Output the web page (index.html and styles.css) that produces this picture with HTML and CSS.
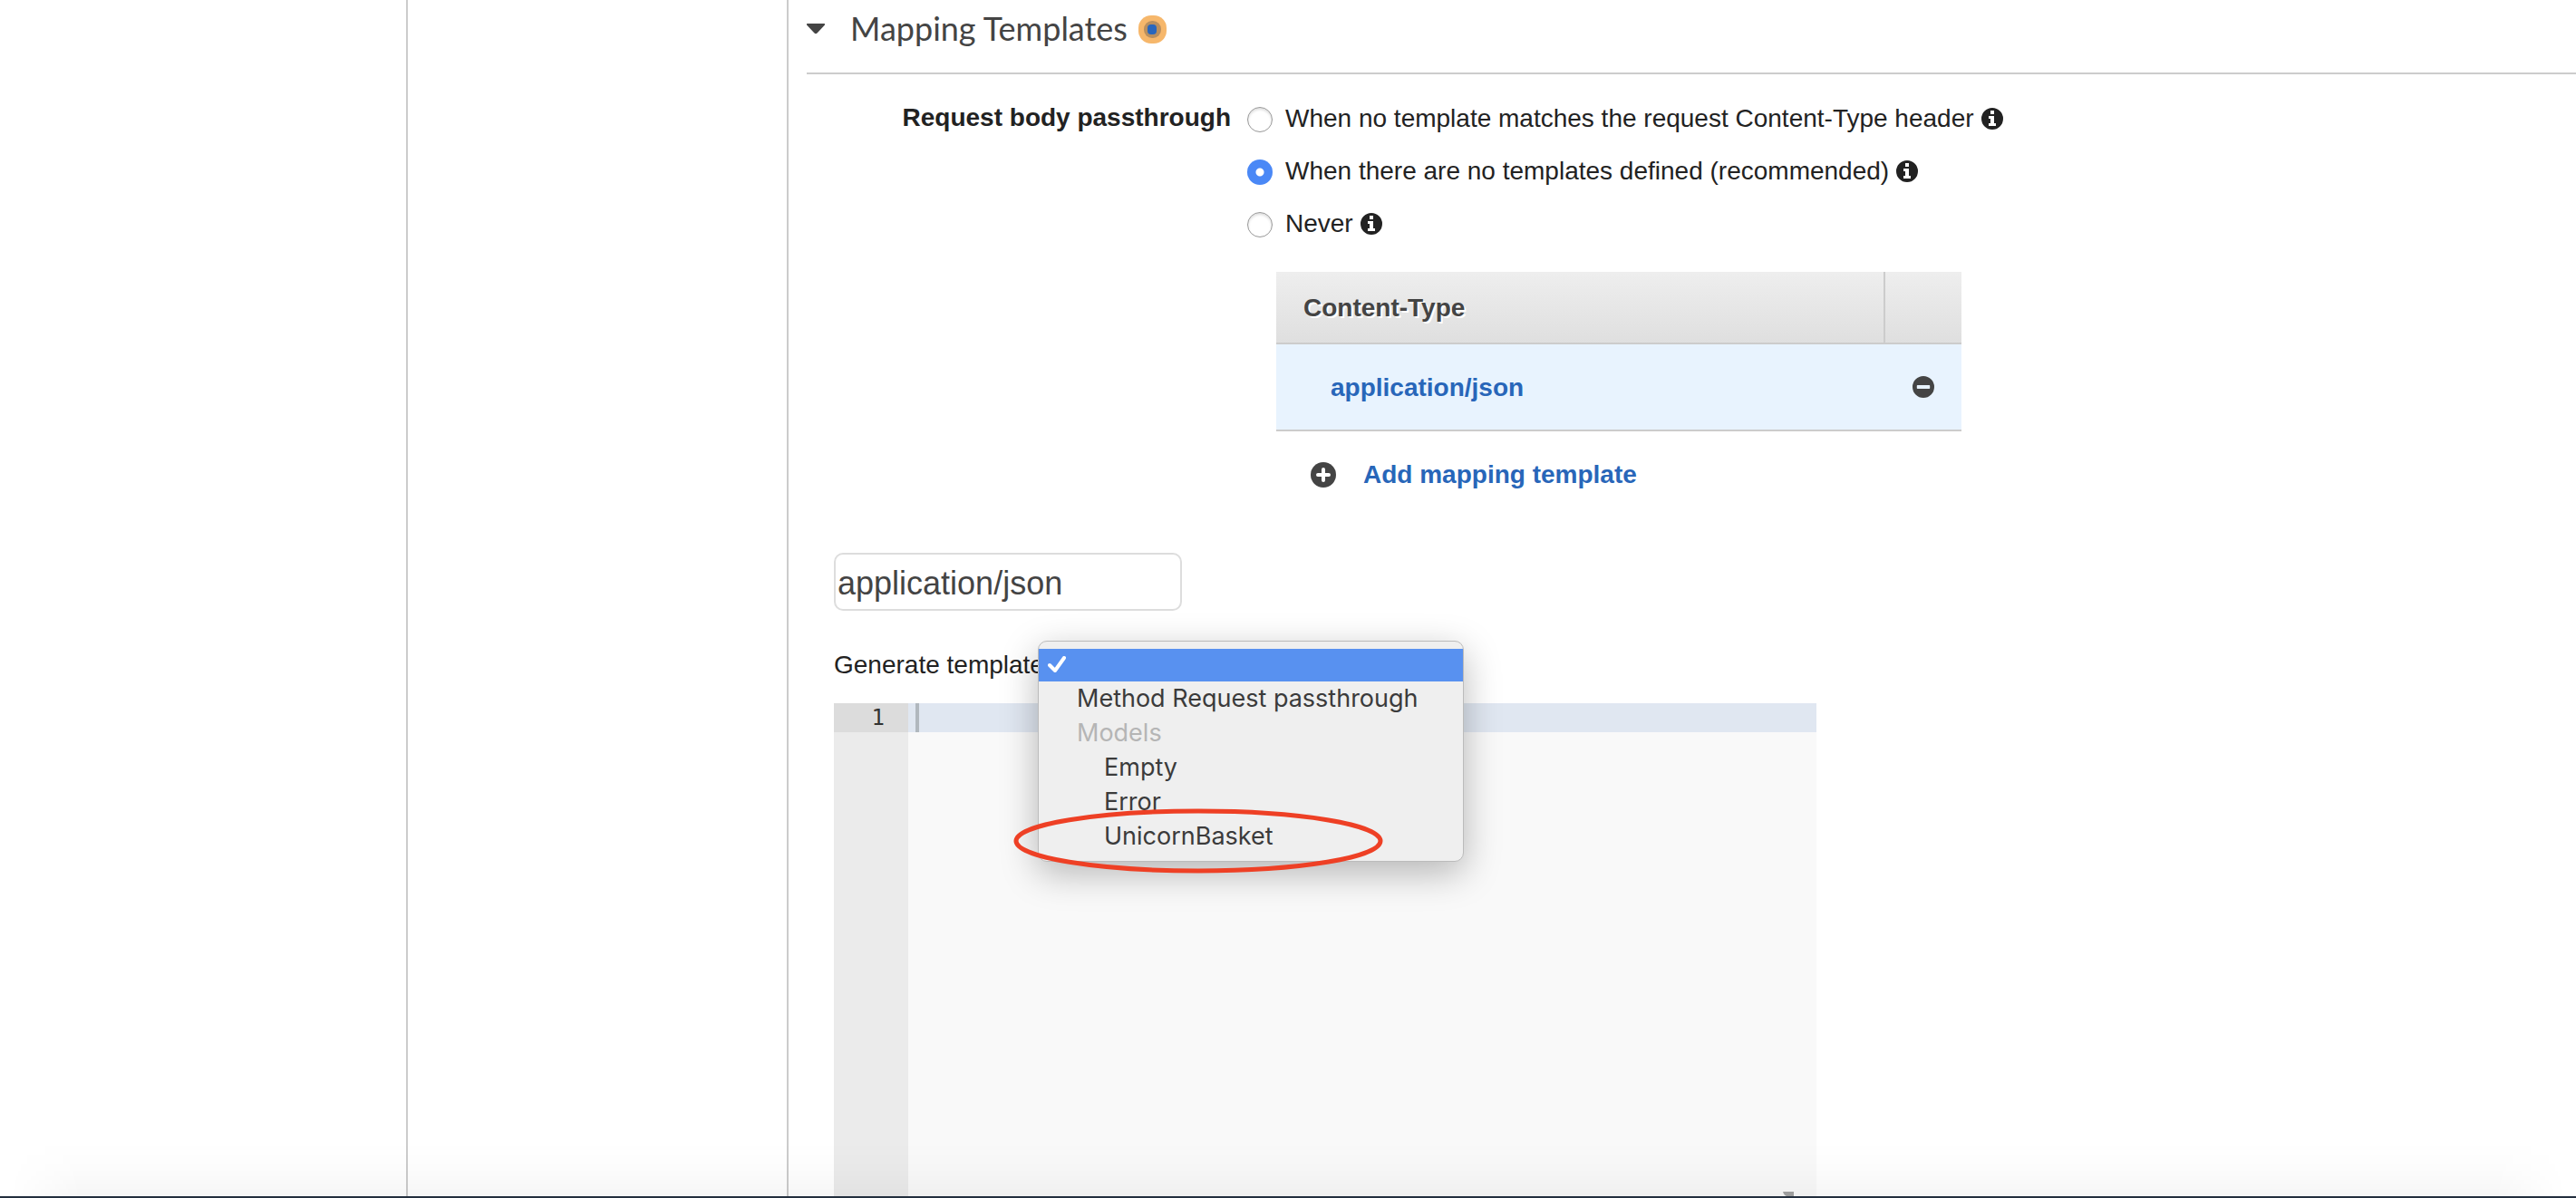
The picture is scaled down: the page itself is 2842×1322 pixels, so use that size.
FILE: index.html
```html
<!DOCTYPE html>
<html lang="en">
<head>
<meta charset="utf-8">
<title>Mapping Templates</title>
<link rel="stylesheet" href="styles.css">
</head>
<body>
<svg class="sprite" aria-hidden="true">
  <symbol id="info" viewBox="0 0 24 24"><path fill="currentColor" fill-rule="evenodd" d="M12 0a12 12 0 1 1 0 24 12 12 0 0 1 0-24zM10 3v4h4V3zM8 9v3h2v5H8v3h8v-3h-2V9z"/></symbol>
  <symbol id="minus" viewBox="0 0 24 24"><path fill="currentColor" fill-rule="evenodd" d="M12 0a12 12 0 1 1 0 24 12 12 0 0 1 0-24zM5.500 10a.7.7 0 0 0-.7.7v2.600a.7.7 0 0 0 .7.7h13a.7.7 0 0 0 .7-.7v-2.600a.7.7 0 0 0-.7-.7z"/></symbol>
  <symbol id="plus" viewBox="0 0 28 28"><circle cx="14" cy="14" r="14" fill="currentColor"/><path stroke="#fff" stroke-width="4" stroke-linecap="round" d="M14 8v12M8 14h12"/></symbol>
</svg>
<div class="workspace">
  <aside class="apis"></aside>
  <aside class="resources"></aside>
  <main class="detail">
    <h2 class="section-title">
      <svg class="caret" viewBox="0 0 20 12" aria-hidden="true"><path fill="#444" d="M1 0h18q2 0 .5 2l-8 8.500q-1.500 1.500-3 0L.5 2Q-1 0 1 0z"/></svg>
      <span>Mapping Templates</span>
      <svg class="beacon" viewBox="0 0 31 31" aria-hidden="true"><rect width="31" height="31" rx="14" fill="#f6b76b"/><rect x="6" y="6" width="19" height="19" rx="9" fill="#b98f5f"/><rect x="10" y="10" width="10" height="11" rx="4" fill="#2866bd"/></svg>
    </h2>
    <fieldset class="passthrough">
      <legend class="passthrough-label">Request body passthrough</legend>
      <div class="choices">
        <label class="choice"><input type="radio" name="pass"><span>When no template matches the request Content-Type header</span><svg class="info"><use href="#info"/></svg></label>
        <label class="choice"><input type="radio" name="pass" checked><span>When there are no templates defined (recommended)</span><svg class="info"><use href="#info"/></svg></label>
        <label class="choice"><input type="radio" name="pass"><span>Never</span><svg class="info"><use href="#info"/></svg></label>
      </div>
    </fieldset>
    <div class="types">
      <table class="type-table">
        <thead><tr><th>Content-Type</th><th class="tools"></th></tr></thead>
        <tbody><tr><td><a href="#template">application/json</a></td><td class="tools"><button class="remove" aria-label="Remove"><svg><use href="#minus"/></svg></button></td></tr></tbody>
      </table>
      <button class="add"><svg><use href="#plus"/></svg><span>Add mapping template</span></button>
    </div>
    <section class="template" id="template">
      <input class="type-input" type="text" value="application/json" aria-label="Content type">
      <div class="generate">
        <label for="model">Generate template:</label>
        <select id="model"><option></option><option>Method Request passthrough</option></select>
        <ul class="menu" role="listbox">
          <li class="chosen" role="option" aria-selected="true"><svg viewBox="0 0 20 18" aria-hidden="true"><path fill="none" stroke="#fff" stroke-width="4" stroke-linecap="round" stroke-linejoin="round" d="M2 10l6 6L18 2"/></svg></li>
          <li role="option">Method Request passthrough</li>
          <li class="group">Models</li>
          <li class="nested" role="option">Empty</li>
          <li class="nested" role="option">Error</li>
          <li class="nested" role="option">UnicornBasket</li>
        </ul>
        <svg class="ring" viewBox="0 0 408 74" aria-hidden="true"><ellipse cx="204" cy="37" rx="201" ry="33" fill="none" stroke="#ee4025" stroke-width="5"/></svg>
      </div>
      <div class="editor">
        <div class="gutter"><span class="line-number">1</span></div>
        <div class="code"><div class="active-line"><span class="cursor"></span></div></div>
        <svg class="grip" viewBox="0 0 12 5" aria-hidden="true"><path fill="#a3a3a3" d="M0 0h12v5H4Q1 4 0 0z"/></svg>
      </div>
    </section>
  </main>
</div>
<footer class="footer"></footer>
</body>
</html>
```
FILE: styles.css
```css
* { box-sizing: border-box; }
body {
  margin: 0;
  height: 100vh;
  display: flex;
  flex-direction: column;
  overflow: hidden;
  background: #fff;
  color: #222;
  font: 28px/32px "Liberation Sans", Arial, sans-serif;
}
.sprite { display: none; }
button { border: 0; padding: 0; background: none; font: inherit; cursor: pointer; }
.workspace { flex: 1; min-height: 0; display: flex; }
.apis { flex: 0 0 450px; border-right: 2px solid #ccc; }
.resources { flex: 0 0 420px; border-right: 2px solid #ccc; }
.detail { flex: 1; min-width: 0; padding-left: 20px; display: flex; flex-direction: column; }
.section-title {
  margin: 0;
  height: 82px;
  display: flex;
  align-items: flex-start;
  border-bottom: 2px solid #ccc;
  color: #444;
  font: 400 36px/62px Lato, sans-serif;
}
.caret { width: 20px; height: 12px; margin: 26px 28px 0 0; }
.beacon { width: 31px; height: 31px; margin: 17px 0 0 12px; }
.passthrough { margin: 0; padding: 20px 0 0; border: 0; }
.passthrough-label { float: left; width: 468px; padding: 12px 0; text-align: right; font-weight: 700; }
.choices { margin-left: 486px; }
.choice { display: flex; align-items: center; height: 58px; }
.choice input {
  appearance: none;
  width: 28px;
  height: 28px;
  margin: 2px 14px 0 0;
  border: 1px solid #999;
  border-radius: 50%;
  background: #fff;
  box-shadow: inset 0 2px 3px #ddd;
}
.choice input:checked { border: 0; background: radial-gradient(circle, #fff 4px, #4a88f6 5px); box-shadow: none; }
.info { width: 24px; height: 24px; margin-left: 8px; }
.types { width: 756px; margin: 24px 0 0 518px; }
.type-table { width: 100%; border-collapse: separate; border-spacing: 0; table-layout: fixed; }
th {
  height: 80px;
  padding: 2px 30px 0;
  border-bottom: 2px solid #ccc;
  background: linear-gradient(#eee, #dfdfdf);
  color: #444;
  text-align: left;
  text-shadow: 2px 2px 0 #fff;
}
th.tools { width: 86px; border-left: 2px solid #ccc; }
td { height: 96px; padding: 2px 0 0 60px; border-bottom: 2px solid #ccc; background: #e8f3fe; font-weight: 700; }
td.tools { padding: 0 32px; }
td a { color: #2866b9; text-decoration: none; }
.remove { display: block; color: #444; }
.remove svg { display: block; width: 24px; height: 24px; }
.add { display: flex; align-items: center; gap: 30px; margin: 32px 0 0 38px; color: #2866b9; font-weight: 700; }
.add svg { width: 28px; height: 28px; color: #444; }
.template { flex: 1; min-height: 0; display: flex; flex-direction: column; margin: 70px 0 0 30px; }
.type-input {
  flex: none;
  width: 384px;
  height: 64px;
  padding: 4px 2px 0;
  border: 2px solid #ddd;
  border-radius: 10px;
  color: #444;
  font: 36px/40px "Liberation Sans", Arial, sans-serif;
}
.generate { position: relative; display: flex; gap: 12px; margin: 44px 0 26px; }
.generate select { width: 300px; height: 32px; }
.menu {
  position: absolute;
  z-index: 1;
  left: 225px;
  top: -11px;
  width: 470px;
  margin: 0;
  padding: 8px 0;
  border: 1px solid #bbb;
  border-radius: 10px;
  background: #efefef;
  box-shadow: 0 12px 40px rgba(0, 0, 0, .28);
  color: #3b3b3b;
  font: 27px/38px Inter, sans-serif;
  list-style: none;
}
.menu li { padding-left: 42px; }
.menu .chosen { height: 36px; padding: 8px 10px; background: #5891f0; }
.menu .chosen svg { display: block; width: 20px; height: 18px; }
.menu .group { color: #b5b5b5; }
.menu .nested { padding-left: 72px; }
.ring { position: absolute; z-index: 2; left: 198px; top: 173px; width: 408px; height: 74px; }
.editor { position: relative; flex: 1; display: flex; width: 1084px; background: #f9f9f9; }
.gutter { flex: 0 0 82px; background: #ebebeb; color: #333; font: 24px/32px "DejaVu Sans Mono", monospace; }
.line-number { display: block; padding-right: 26px; background: #dcdcdc; text-align: right; }
.code { flex: 1; }
.active-line { height: 32px; padding-left: 8px; background: #e0e7f1; }
.cursor { display: block; width: 4px; height: 32px; background: #b1b8be; }
.grip { position: absolute; right: 25px; bottom: 0; width: 12px; height: 5px; }
.footer { position: relative; flex: 0 0 2px; background: #232f3e; }
/* soft shade that the bar casts upward, fading out toward both ends */
.footer::before {
  content: "";
  position: absolute;
  left: 0;
  right: 0;
  bottom: 2px;
  height: 60px;
  background: linear-gradient(to top, rgba(0, 0, 0, .035), rgba(0, 0, 0, .012) 50%, transparent);
  mask-image: linear-gradient(to right, transparent 10px, #000 90px, #000 calc(100% - 90px), transparent calc(100% - 10px));
}
```
